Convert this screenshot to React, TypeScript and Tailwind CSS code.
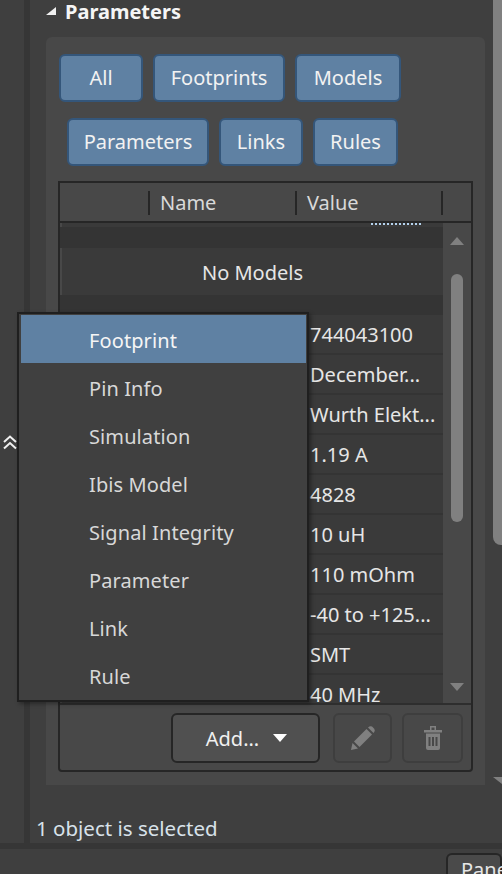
const rows = [
  "744043100",
  "December...",
  "Wurth Elekt...",
  "1.19 A",
  "4828",
  "10 uH",
  "110 mOhm",
  "-40 to +125...",
  "SMT",
  "40 MHz",
];

const menuItems = ["Footprint", "Pin Info", "Simulation", "Ibis Model", "Signal Integrity", "Parameter", "Link", "Rule"];

const FilterButton = ({ label, width }: { label: string; width: string }) => (
  <button className={`h-12 ${width} rounded-md border-2 border-[#34567a] bg-[#5f81a3] text-[#f2f2f2]`}>{label}</button>
);

const Triangle = ({ className }: { className: string }) => (
  <svg viewBox="0 0 14 8" className={className} fill="currentColor">
    <path d="M7 0 14 8H0Z" />
  </svg>
);

const App = () => {
  return (
    <div className="relative flex h-[874px] w-[502px] flex-col overflow-hidden bg-[#3f3f3f] font-['Noto_Sans',sans-serif] text-[20px] leading-none text-[#e6e6e6]">
      <div className="flex h-[843px] flex-none">
        <div className="flex w-6 flex-none items-center justify-center pr-[5px] pt-[42px]">
          <svg viewBox="0 0 14 15" className="h-[15px] w-[14px] text-[#f0f0f0]" fill="none" stroke="currentColor" strokeWidth="2">
            <path d="M1 7 7 1.5 13 7" />
            <path d="M1 13.5 7 8 13 13.5" />
          </svg>
        </div>
        <div className="w-1.5 flex-none bg-[#363636]" />

        <div className="flex w-[463px] flex-none flex-col">
          <div className="flex h-[37px] flex-none items-start pl-4">
            <svg viewBox="0 0 10 8" className="mt-[7px] h-2 w-2.5 text-[#f0f0f0]" fill="currentColor">
              <path d="M10 0V8H0Z" />
            </svg>
            <span className="ml-[9px] mt-[2px] text-[20px] font-bold text-[#f5f5f5]">Parameters</span>
          </div>

          <div className="ml-4 flex h-[748px] w-[439px] flex-none flex-col rounded-t-md bg-[#484848] pl-3 pt-[17px]">
            <div className="flex gap-2.5 pl-px">
              <FilterButton label="All" width="w-[84px]" />
              <FilterButton label="Footprints" width="w-[132px]" />
              <FilterButton label="Models" width="w-[106px]" />
            </div>
            <div className="mt-4 flex gap-2.5 pl-[9px]">
              <FilterButton label="Parameters" width="w-[142px]" />
              <FilterButton label="Links" width="w-[84px]" />
              <FilterButton label="Rules" width="w-[85px]" />
            </div>

            <div className="mt-[15px] flex h-[591px] w-[415px] flex-col rounded-b-sm border-2 border-[#262626]">
              <div className="flex h-10 flex-none items-center border-b-2 border-[#262626] pt-px text-[#d9d9d9]">
                <div className="h-6 w-[90px] flex-none border-r-2 border-[#262626]" />
                <div className="flex h-6 w-[147px] flex-none items-center border-r-2 border-[#262626] pl-[10px]">Name</div>
                <div className="flex h-6 w-[146px] flex-none items-center border-r-2 border-[#262626] pl-[10px]">Value</div>
              </div>

              <div className="flex h-[480px] flex-none overflow-hidden">
                <div className="flex w-[383px] flex-none flex-col overflow-hidden">
                  <div className="ml-0.5 flex h-1 flex-none justify-end bg-[#3a3a3a] pr-[22px]">
                    <div className="mb-[2px] w-[50px] border-t-2 border-dotted border-[#b5d3ee]" />
                  </div>
                  <div className="h-[21px] flex-none bg-[#343434]" />
                  <div className="ml-0.5 flex h-[47px] flex-none items-center justify-center bg-[#3a3a3a] pt-[3px]">No Models</div>
                  <div className="h-5 flex-none bg-[#343434]" />
                  {rows.map((value) => (
                    <div key={value} className="ml-0.5 flex h-10 flex-none items-center border-b-2 border-[#343434] bg-[#3a3a3a] pl-[248px] pt-[2px]">
                      {value}
                    </div>
                  ))}
                </div>
                <div className="flex w-7 flex-none flex-col items-center bg-[#484848] pt-[14px] text-[#808080]">
                  <Triangle className="h-2 w-[14px]" />
                  <div className="mt-[29px] h-[248px] w-3 flex-none rounded-full bg-[#808080]" />
                  <Triangle className="mt-[161px] h-2 w-[14px] rotate-180" />
                </div>
              </div>

              <div className="flex flex-1 items-center justify-end gap-2.5 border-t-2 border-[#2e2e2e] pr-2 pt-px">
                <button className="mr-[3px] flex h-[50px] w-[149px] items-center justify-center gap-[14px] rounded-md border-2 border-[#262626] bg-[#505050] pl-[2px] pt-px text-[#f0f0f0]">
                  Add...
                  <svg viewBox="0 0 14 8" className="mb-0.5 h-2 w-[14px] text-white" fill="currentColor">
                    <path d="M0 0H14L7 8Z" />
                  </svg>
                </button>
                <button className="flex h-[50px] w-[59px] items-center justify-center rounded-md border-2 border-[#3e3e3e] text-[#808080]">
                  <svg viewBox="0 0 24 24" className="h-6 w-6" fill="currentColor">
                    <path d="M0 24 1.5 17 7 22.5Z" />
                    <path d="M3 15.5 15.5 3 21 8.5 8.5 21Z" />
                    <path d="M17 1.5Q19-.5 21 .5L23.2 2.7Q24.5 5 22.5 7Z" />
                  </svg>
                </button>
                <button className="flex h-[50px] w-[61px] items-center justify-center rounded-md border-2 border-[#3e3e3e] text-[#808080]">
                  <svg viewBox="0 0 18 24" className="h-6 w-[18px]" fill="currentColor">
                    <path fillRule="evenodd" d="M6 0H12V4H18V6.5H0V4H6ZM7.5 1.5V4H10.5V1.5Z" />
                    <path fillRule="evenodd" d="M2 7.5H16V22Q16 24 14 24H4Q2 24 2 22ZM4.5 11V20H6.5V11ZM8 11V20H10V11ZM11.5 11V20H13.5V11Z" />
                  </svg>
                </button>
              </div>
            </div>
          </div>

          <div className="flex flex-1 items-end pb-[5px] pl-1.5 text-[20.5px] text-[#d8e2ea]">1 object is selected</div>
        </div>

        <div className="flex w-[9px] flex-none flex-col justify-between pb-[59px] text-[#808080]">
          <div className="h-[545px] w-[9px] rounded-bl-lg bg-[#808080]" />
          <svg viewBox="0 0 9 7" className="h-[7px] w-[9px]" fill="currentColor">
            <path d="M0 0H9V7Z" />
          </svg>
        </div>
      </div>

      <div className="h-1.5 flex-none bg-[#363636]" />
      <div className="flex flex-1 justify-end pt-1">
        <div className="h-8 w-14 rounded-t-md border-2 border-b-0 border-[#262626] bg-[#4a4a4a] pl-[13px] pt-[5px]">Panels</div>
      </div>

      <div className="absolute left-[17px] top-[312px] flex h-[390px] w-[292px] flex-col border-2 border-[#1f1f1f] bg-[#404040] pl-0.5 pr-px pt-px shadow-[2px_2px_4px_rgba(0,0,0,0.35)]">
        {menuItems.map((item, index) => (
          <div key={item} className={`flex h-12 flex-none items-center pl-[68px] pt-1 tracking-[0.1px] ${index === 0 ? "bg-[#5f81a3] text-[#f5f5f5]" : "text-[#d8d8d8]"}`}>
            {item}
          </div>
        ))}
      </div>
    </div>
  );
};

export default App;
